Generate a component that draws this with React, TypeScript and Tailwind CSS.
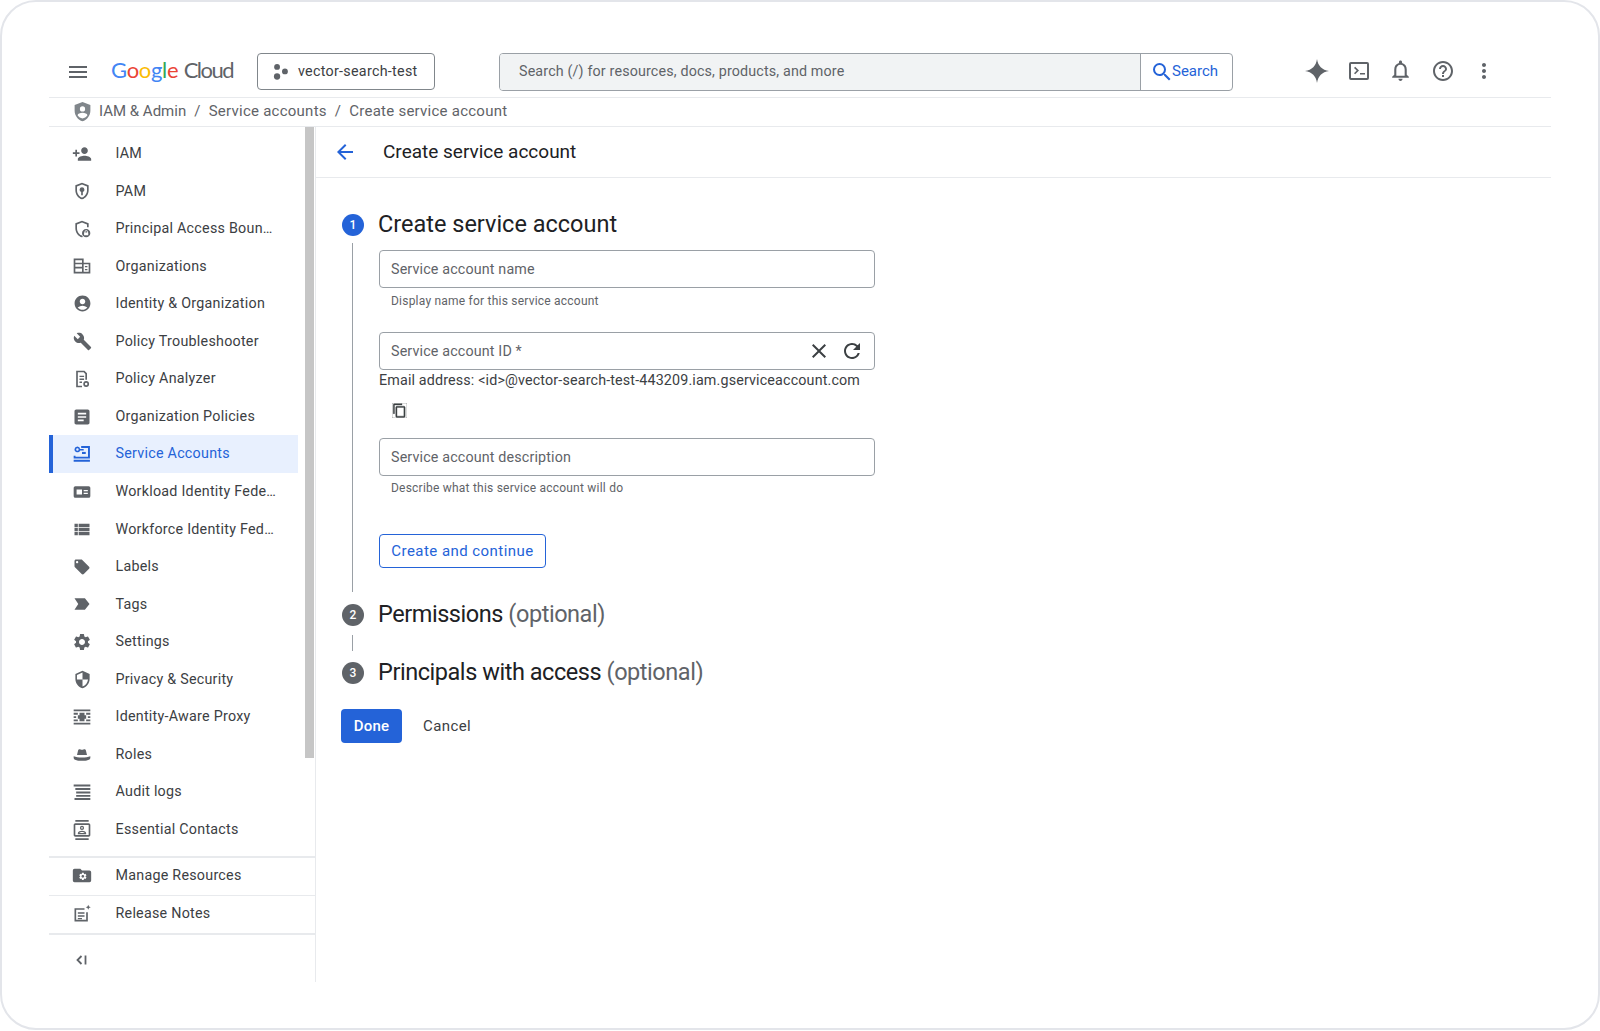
import type { ReactNode } from "react";
import {
  MdMenu,
  MdPersonAdd,
  MdAccountCircle,
  MdBuild,
  MdArticle,
  MdLocalOffer,
  MdSettings,
  MdSecurity,
  MdViewList,
  MdClose,
  MdRefresh,
  MdOutlineContentCopy,
  MdArrowBack,
  MdSearch,
  MdMoreVert,
  MdNotificationsNone,
  MdHelpOutline,
  MdOutlineContacts,
} from "react-icons/md";

const Svg = ({ children, className = "h-5 w-5" }: { children: ReactNode; className?: string }) => (
  <svg viewBox="0 0 24 24" fill="currentColor" className={className}>
    {children}
  </svg>
);

const PamIcon = () => (
  <Svg>
    <path d="M12 2 4 5.200V11c0 5 3.400 9.700 8 11 4.600-1.300 8-6 8-11V5.200L12 2zm0 2.200 6 2.400V11c0 4-2.600 7.800-6 8.900-3.400-1.100-6-4.900-6-8.900V6.600l6-2.400z" />
    <path d="M12 7.500a3 3 0 0 0-1 5.800V17h2v-3.700a3 3 0 0 0-1-5.800z" />
  </Svg>
);

const BoundaryIcon = () => (
  <Svg>
    <path d="M12 2 4 5.200V11c0 5 3.400 9.700 8 11l1-.3-.8-1.900C8.700 19 6 15 6 11V6.600l6-2.400 6 2.400V10h2V5.200L12 2z" />
    <path d="M17 12a5 5 0 1 0 0 10 5 5 0 0 0 0-10zm0 1.500a2 2 0 0 1 2 2v.7h.5v3.300h-5v-3.300h.5v-.7a2 2 0 0 1 2-2zm0 1a1 1 0 0 0-1 1v.7h2v-.7a1 1 0 0 0-1-1z" fillRule="evenodd" />
  </Svg>
);

const OrgIcon = () => (
  <Svg>
    <path d="M2 3h12v5h8v13H2V3zm2 2v3h8V5H4zm0 5v3h8v-3H4zm0 5v4h8v-4H4zm10-5v9h6v-9h-6zm1.500 2h3v1.500h-3V12zm0 3.500h3V17h-3v-1.500z" fillRule="evenodd" />
  </Svg>
);

const AnalyzerIcon = () => (
  <Svg>
    <path d="M5 2h10l3 3v8h-2V6l-2-2H7v16h5v2H5V2z" />
    <path d="M9 8h5.500v1.700H9zM9 11.500h5.500v1.700H9zM9 15h3v1.700H9z" />
    <path d="M17 14.500a3.500 3.500 0 1 0 0 7 3.500 3.500 0 0 0 0-7zm0 2a1.500 1.500 0 1 1 0 3 1.500 1.500 0 0 1 0-3z" fillRule="evenodd" />
  </Svg>
);

const KeyIcon = () => (
  <Svg>
    <path d="M6.500 3a3.500 3.500 0 1 0 3.300 4.700H14V6H9.800A3.500 3.500 0 0 0 6.500 3zm0 2a1.500 1.500 0 1 1 0 3 1.500 1.500 0 0 1 0-3z" fillRule="evenodd" />
    <path d="M11 2.500h10.500v15H2V14h2.200v1.300h15V4.700H11V2.500zM2 19h19.500v2.300H2V19z" />
    <path d="M12 9.500h4.500V12H12z" />
  </Svg>
);

const WorkloadIcon = () => (
  <Svg>
    <path d="M4 5h16a2 2 0 0 1 2 2v10a2 2 0 0 1-2 2H4a2 2 0 0 1-2-2V7a2 2 0 0 1 2-2zm1.500 4v6H12V9H5.500zm8.500.500V11h5V9.500h-5zm0 3.500v1.500h5V13h-5z" fillRule="evenodd" />
  </Svg>
);

const TagIcon = () => (
  <Svg>
    <path d="M3 5h12.500L21 12l-5.500 7H3l4.500-7L3 5z" />
  </Svg>
);

const ProxyIcon = () => (
  <Svg>
    <path d="M2 3h20v2.200H2zM2 18.800h20V21H2z" />
    <path d="M2 7h5v2.200H2zM17 7h5v2.200h-5zM2 11h3v2.200H2zM19 11h3v2.200h-3zM2 15h5v2H2zM17 15h5v2h-5z" />
    <path d="M9 7h6v3h2v4h-2v3H9v-3H7v-4h2V7z" />
  </Svg>
);

const HatIcon = () => (
  <Svg>
    <path d="M6 12 7.300 6.500c.300-1.100 1.300-1.600 2.300-1.300l1.400.4c.6.2 1.400.2 2 0l1.400-.4c1-.3 2 .2 2.300 1.300L18 12H6z" />
    <path d="M2 13.500c2.500 1 6 1.500 10 1.500s7.500-.5 10-1.500v2c0 2-4 3.500-10 3.500S2 17.500 2 15.500v-2z" />
  </Svg>
);

const AuditIcon = () => (
  <Svg>
    <path d="M2 3h20v2.300H2zM4 7.300h18v2.300H4zM5 11.500h17v2.300H5zM5 15.500h17v2.300H5zM3 19.200h19v2.300H3z" />
  </Svg>
);

const ManageIcon = () => (
  <svg viewBox="0 0 24 24" className="h-[21px] w-[21px]" fill="currentColor">
    <path d="M3 4h7l2 2h9a2 2 0 0 1 2 2v10a2 2 0 0 1-2 2H3a2 2 0 0 1-2-2V6a2 2 0 0 1 2-2z" />
    <path
      transform="translate(7.500 7.500) scale(0.46)"
      fill="#fff"
      d="M19.14,12.94c0.04-0.3,0.06-0.61,0.06-0.94c0-0.32-0.02-0.64-0.07-0.94l2.03-1.58c0.18-0.14,0.23-0.41,0.12-0.61 l-1.92-3.32c-0.12-0.22-0.37-0.29-0.59-0.22l-2.39,0.96c-0.5-0.38-1.03-0.7-1.62-0.94L14.4,2.81c-0.04-0.24-0.24-0.41-0.48-0.41 h-3.84c-0.24,0-0.43,0.17-0.47,0.41L9.25,5.35C8.66,5.59,8.12,5.92,7.63,6.29L5.24,5.33c-0.22-0.08-0.47,0-0.59,0.22L2.74,8.87 C2.62,9.08,2.66,9.34,2.86,9.48l2.03,1.58C4.84,11.36,4.8,11.69,4.8,12s0.02,0.64,0.07,0.94l-2.03,1.58 c-0.18,0.14-0.23,0.41-0.12,0.61l1.92,3.32c0.12,0.22,0.37,0.29,0.59,0.22l2.39-0.96c0.5,0.38,1.03,0.7,1.62,0.94l0.36,2.54 c0.05,0.24,0.24,0.41,0.48,0.41h3.84c0.24,0,0.44-0.17,0.47-0.41l0.36-2.54c0.59-0.24,1.13-0.56,1.62-0.94l2.39,0.96 c0.22,0.08,0.47,0,0.59-0.22l1.92-3.32c0.12-0.22,0.07-0.47-0.12-0.61L19.14,12.94z M12,15.6c-1.98,0-3.6-1.62-3.6-3.6 s1.62-3.6,3.6-3.6s3.6,1.62,3.6,3.6S13.98,15.6,12,15.6z"
    />
  </svg>
);

const NotesIcon = () => (
  <Svg>
    <path d="M3 5h12v2H5v12h12V10h2v11H3V5z" />
    <path d="M7 10h8v1.800H7zM7 13.500h8v1.800H7zM7 16.800h5v1.500H7z" />
    <path d="m19.500 1 .9 2.100 2.100.9-2.100.9-.9 2.100-.9-2.100-2.100-.9 2.100-.9.9-2.100z" />
  </Svg>
);

const navItems: { label: string; icon: ReactNode; active?: boolean }[] = [
  { label: "IAM", icon: <MdPersonAdd size={20} /> },
  { label: "PAM", icon: <PamIcon /> },
  { label: "Principal Access Boun…", icon: <BoundaryIcon /> },
  { label: "Organizations", icon: <OrgIcon /> },
  { label: "Identity & Organization", icon: <MdAccountCircle size={19} /> },
  { label: "Policy Troubleshooter", icon: <MdBuild size={19} /> },
  { label: "Policy Analyzer", icon: <AnalyzerIcon /> },
  { label: "Organization Policies", icon: <MdArticle size={20} /> },
  { label: "Service Accounts", icon: <KeyIcon />, active: true },
  { label: "Workload Identity Fede…", icon: <WorkloadIcon /> },
  { label: "Workforce Identity Fed…", icon: <MdViewList size={21} /> },
  { label: "Labels", icon: <MdLocalOffer size={18} /> },
  { label: "Tags", icon: <TagIcon /> },
  { label: "Settings", icon: <MdSettings size={20} /> },
  { label: "Privacy & Security", icon: <MdSecurity size={19} /> },
  { label: "Identity-Aware Proxy", icon: <ProxyIcon /> },
  { label: "Roles", icon: <HatIcon /> },
  { label: "Audit logs", icon: <AuditIcon /> },
  { label: "Essential Contacts", icon: <MdOutlineContacts size={20} /> },
];

const Field = ({ label, children }: { label: string; children?: ReactNode }) => (
  <div className="flex h-[38px] w-[496px] items-center justify-between rounded border border-[#9aa0a6] pl-[11px] pr-[10px] text-[14.3px] tracking-[0.15px] text-[#5f6368]">
    <span className="pt-[1px]">{label}</span>
    {children}
  </div>
);

const StepBadge = ({ n, active }: { n: number; active?: boolean }) => (
  <span
    className={`flex h-[22px] w-[22px] items-center justify-center rounded-full text-[12px] font-medium text-white ${
      active ? "bg-[#2463d8]" : "bg-[#5f6368]"
    }`}
  >
    {n}
  </span>
);

const Step = ({ n, title, optional, active }: { n: number; title: string; optional?: boolean; active?: boolean }) => (
  <div className="ml-[26px] flex h-[32px] items-center gap-[14px] text-[23.500px] text-[#202124]">
    <StepBadge n={n} active={active} />
    <span className={optional ? "tracking-[-0.45px]" : ""}>
      {title}
      {optional && <span className="text-[#5f6368]"> (optional)</span>}
    </span>
  </div>
);

export default function App() {
  return (
    <div className="h-[1031px] w-full bg-white font-['Roboto',sans-serif] text-[#3c4043]">
      <div className="flex h-[1030px] flex-col rounded-[36px] border-2 border-[#e3e5ea] px-[47px] pt-[44px]">
        <header className="flex h-[52px] shrink-0 items-center border-b border-[#e8eaed]">
          <MdMenu size={24} className="ml-[17px] text-[#5f6368]" />
          <div className="ml-[21px] w-[146px] pb-[4px] font-['Lato',sans-serif] text-[22px] tracking-[-0.3px] text-[#5f6368]">
            <span className="text-[#4285f4]">G</span>
            <span className="text-[#ea4335]">o</span>
            <span className="text-[#fbbc04]">o</span>
            <span className="text-[#4285f4]">g</span>
            <span className="text-[#34a853]">l</span>
            <span className="text-[#ea4335]">e</span> <span className="tracking-[-1.500px]">Cloud</span>
          </div>
          <div className="flex h-[37px] w-[178px] items-center rounded border border-[#80868b] pl-[14px] text-[14.3px] tracking-[0.28px]">
            <svg viewBox="0 0 16 16" fill="#5f6368" className="h-[18px] w-[18px]">
              <circle cx="4.500" cy="3.500" r="2.600" />
              <circle cx="4.500" cy="12" r="2.800" />
              <circle cx="11.500" cy="7.500" r="2.600" />
            </svg>
            <span className="ml-[8px]">vector-search-test</span>
          </div>
          <div className="ml-[64px] flex h-[38px] w-[734px] overflow-hidden rounded border border-[#9aa0a6] text-[14.3px]">
            <div className="flex flex-1 items-center border-r border-[#9aa0a6] bg-[#f1f3f4] pl-[19px] tracking-[0.15px] text-[#5f6368]">
              Search (/) for resources, docs, products, and more
            </div>
            <div className="flex w-[91px] items-center pl-[9px] text-[15px] text-[#2463d8]">
              <MdSearch size={24} className="-mr-[2px] shrink-0" />
              Search
            </div>
          </div>
          <div className="ml-[72px] flex items-center gap-[17.500px] pb-[2px] text-[#5f6368]">
            <svg viewBox="0 0 24 24" fill="currentColor" className="h-6 w-6">
              <path d="M12 0c1 7 5 11 12 12-7 1-11 5-12 12-1-7-5-11-12-12 7-1 11-5 12-12z" />
            </svg>
            <svg viewBox="0 0 24 24" fill="currentColor" className="h-6 w-6">
              <path d="M4 3h16a2 2 0 0 1 2 2v14a2 2 0 0 1-2 2H4a2 2 0 0 1-2-2V5a2 2 0 0 1 2-2zm0 2v14h16V5H4zm3 4 1.200-1.200L12 11.500l-3.800 3.800L7 14.200l2.700-2.700L7 9zm6 5h5v1.600h-5V14z" fillRule="evenodd" />
            </svg>
            <MdNotificationsNone size={25} />
            <MdHelpOutline size={24} />
            <MdMoreVert size={24} />
          </div>
        </header>

        <nav className="flex h-[29px] shrink-0 items-center border-b border-[#e8eaed] pb-[2px] pl-[23px] text-[15px] tracking-[0.25px] text-[#5f6368]">
          <svg viewBox="0 0 24 24" fill="#80868b" className="h-[21px] w-[21px]">
            <path d="M12 1 3 4.500V11c0 5.500 3.800 10.600 9 12 5.200-1.400 9-6.500 9-12V4.500L12 1zm0 5a3 3 0 1 1 0 6 3 3 0 0 1 0-6zm0 7.500c2.700 0 5.500 1.100 5.500 2.500v.5c-1.200 1.700-3.300 3-5.500 3.500-2.200-.5-4.300-1.800-5.500-3.500V16c0-1.400 2.800-2.500 5.500-2.500z" fillRule="evenodd" />
          </svg>
          <span className="ml-[6px] tracking-normal">IAM &amp; Admin</span>
          <span className="mx-[8px]">/</span>
          <span>Service accounts</span>
          <span className="mx-[8px]">/</span>
          <span>Create service account</span>
        </nav>

        <div className="flex h-[855px] shrink-0">
          <aside className="flex w-[267px] shrink-0 flex-col border-r border-[#e8eaed]">
            <div className="flex h-[731px] shrink-0 border-b-2 border-[#e8eaed]">
              <ul className="w-[256px] pt-[8px]">
                {navItems.map((item) => (
                  <li
                    key={item.label}
                    className={`flex h-[37.550px] w-[249px] items-center text-[14.3px] tracking-[0.25px] ${
                      item.active
                        ? "border-l-4 border-[#2463d8] bg-[#e8f0fe] pl-[19px] text-[#2463d8]"
                        : "pl-[23px] text-[#3c4043]"
                    }`}
                  >
                    <span className={`flex w-[20px] justify-center ${item.active ? "text-[#2463d8]" : "text-[#5f6368]"}`}>
                      {item.icon}
                    </span>
                    <span className="ml-[23.500px]">{item.label}</span>
                  </li>
                ))}
              </ul>
              <div className="h-[631px] w-[9px] bg-[#c6c6c6]" />
            </div>
            <div className="flex h-[38px] shrink-0 items-center border-b border-[#e8eaed] pb-[2px] pl-[23px] text-[14.3px] tracking-[0.25px]">
              <span className="flex w-[20px] justify-center text-[#5f6368]">
                <ManageIcon />
              </span>
              <span className="ml-[23.500px]">Manage Resources</span>
            </div>
            <div className="flex h-[39px] shrink-0 items-center border-b-2 border-[#e8eaed] pb-[1px] pl-[23px] text-[14.3px] tracking-[0.25px]">
              <span className="flex w-[20px] justify-center text-[#5f6368]">
                <NotesIcon />
              </span>
              <span className="ml-[23.500px]">Release Notes</span>
            </div>
            <div className="flex h-[50px] items-center pl-[23px] pt-[2px]">
              <svg viewBox="0 0 20 20" fill="none" stroke="#5f6368" strokeWidth="1.800" className="h-5 w-5">
                <path d="M9.500 6 5.500 10l4 4M13.500 5.500v9" />
              </svg>
            </div>
          </aside>

          <main className="flex-1">
            <div className="flex h-[51px] items-center border-b border-[#e8eaed] pl-[17px] text-[19px] text-[#202124]">
              <MdArrowBack size={24} className="text-[#2463d8]" />
              <span className="ml-[26px]">Create service account</span>
            </div>

            <div className="pt-[31px]">
              <Step n={1} title="Create service account" active />
              <div className="ml-[36px] mt-[2px] h-[349px] border-l border-[#9aa0a6] pl-[26px] pt-[7px]">
                <Field label="Service account name" />
                <p className="ml-[12px] mt-[5px] text-[12px] leading-4 tracking-[0.22px] text-[#5f6368]">Display name for this service account</p>
                <div className="mt-[23px]">
                  <Field label="Service account ID *">
                    <span className="flex items-center gap-[9px] text-[#3c4043]">
                      <MdClose size={24} />
                      <MdRefresh size={24} />
                    </span>
                  </Field>
                </div>
                <p className="text-[14.3px] leading-5 tracking-[0.15px] text-[#3c4043]">
                  Email address: &lt;id&gt;@vector-search-test-443209.iam.gserviceaccount.com
                </p>
                <MdOutlineContentCopy size={15} stroke="currentColor" strokeWidth={0.6} className="ml-[13px] mt-[13px] text-[#3c4043]" />
                <div className="mt-[20px]">
                  <Field label="Service account description" />
                </div>
                <p className="ml-[12px] mt-[4px] text-[12px] leading-4 tracking-[0.22px] text-[#5f6368]">Describe what this service account will do</p>
                <button className="mt-[38px] flex h-[34px] w-[167px] items-center justify-center rounded border border-[#2463d8] text-[15px] tracking-[0.45px] text-[#2463d8]">
                  Create and continue
                </button>
              </div>
              <div className="mt-[7px]">
                <Step n={2} title="Permissions" optional />
              </div>
              <div className="ml-[36px] mt-[4px] h-[16px] border-l border-[#9aa0a6]" />
              <div className="mt-[6px]">
                <Step n={3} title="Principals with access" optional />
              </div>
              <div className="ml-[25px] mt-[20px] flex items-center">
                <button className="h-[34px] w-[61px] rounded bg-[#2463d8] text-[15px] font-medium tracking-[0.2px] text-white">Done</button>
                <button className="ml-[21px] text-[15px] tracking-[0.4px] text-[#3c4043]">Cancel</button>
              </div>
            </div>
          </main>
        </div>
      </div>
    </div>
  );
}
